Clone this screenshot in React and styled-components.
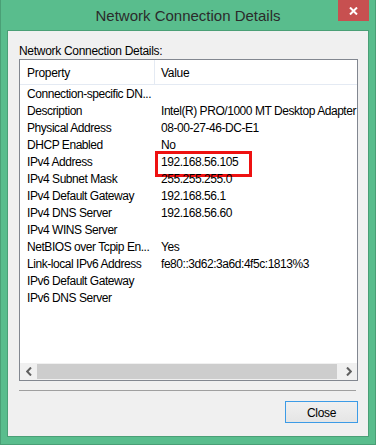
import React from 'react'
import styled, { createGlobalStyle } from 'styled-components'

const GlobalStyle = createGlobalStyle`
    html, body {
        margin: 0;
        padding: 0;
        background: #59bd8d;
    }
    * {
        box-sizing: border-box;
    }
`

const Window = styled.div`
    width: 376px;
    height: 445px;
    display: flex;
    flex-direction: column;
    background: #59bd8d;
    border: 1px solid #4a9f76;
    border-top: none;
    font-family: "Liberation Sans", Arial, sans-serif;
`

const TitleBar = styled.div`
    height: 30px;
    display: grid;
    grid-template-columns: 37px 1fr 37px;
    align-items: start;
`

const Title = styled.div`
    grid-column: 2;
    text-align: center;
    font-size: 15px;
    line-height: 30px;
    padding-top: 1px;
    color: #2b2b2b;
`

const CaptionClose = styled.div`
    width: 31px;
    height: 21px;
    background: #c75050;
    display: flex;
    align-items: center;
    justify-content: center;
`

const Client = styled.div`
    flex: 1;
    margin: 0 6px 7px 6px;
    border: 1px solid #4a9f76;
    background: #f0f0f0;
    display: flex;
    flex-direction: column;
    padding: 10px 10px 13px 11px;
`

const Label = styled.div`
    font-size: 12px;
    line-height: 16px;
    padding-top: 2px;
    height: 16px;
    letter-spacing: -0.3px;
    color: #000;
`

const ListBox = styled.div`
    margin-top: 2px;
    height: 322px;
    border: 1px solid #828790;
    background: #fff;
    display: flex;
    flex-direction: column;
`

const Rows = styled.div`
    flex: 1;
`

const Header = styled.div`
    display: grid;
    grid-template-columns: 135px 1fr;
    height: 25px;
    border-bottom: 1px solid #e4eaf3;
`

const HeaderCell = styled.div`
    font-size: 12px;
    line-height: 24px;
    padding: 1px 0 0 ${props => props.first ? '7px' : '6px'};
    letter-spacing: -0.3px;
    color: #000;
    border-right: ${props => props.first ? '1px solid #e4eaf3' : 'none'};
`

const Row = styled.div`
    display: grid;
    grid-template-columns: 135px 1fr;
    height: 17px;
`

const Cell = styled.div`
    position: relative;
    height: 17px;
    font-size: 12px;
    line-height: 15px;
    padding: 2px 0 0 ${props => props.first ? '7px' : '6px'};
    letter-spacing: -0.45px;
    color: #000;
    white-space: nowrap;

    &::after {
        content: '';
        display: ${props => props.highlight ? 'block' : 'none'};
        position: absolute;
        left: 0;
        top: -2px;
        width: 91px;
        height: 20px;
        border: 3px solid #ee1111;
    }
`

const ScrollBar = styled.div`
    height: 17px;
    display: flex;
    background: #f0f0f0;
`

const ScrollArrow = styled.div`
    width: 17px;
    height: 17px;
    display: flex;
    align-items: center;
    justify-content: center;
`

const Thumb = styled.div`
    width: 300px;
    margin: 1px 0;
    background: #cdcdcd;
`

const Track = styled.div`
    flex: 1;
`

const Separator = styled.div`
    margin-top: 9px;
    width: 337px;
    height: 1px;
    background: #a0a0a0;
`

const Footer = styled.div`
    margin-top: 10px;
    display: flex;
    justify-content: flex-end;
`

const Button = styled.button`
    width: 73px;
    height: 22px;
    border: 1px solid #3c9be6;
    background: linear-gradient(#f0f0f0, #e5e5e5);
    font-family: "Liberation Sans", Arial, sans-serif;
    font-size: 12px;
    letter-spacing: -0.3px;
    color: #000;
    padding: 1px 0 0;
`

const rows = [
    ['Connection-specific DN...', ''],
    ['Description', 'Intel(R) PRO/1000 MT Desktop Adapter'],
    ['Physical Address', '08-00-27-46-DC-E1'],
    ['DHCP Enabled', 'No'],
    ['IPv4 Address', '192.168.56.105', true],
    ['IPv4 Subnet Mask', '255.255.255.0'],
    ['IPv4 Default Gateway', '192.168.56.1'],
    ['IPv4 DNS Server', '192.168.56.60'],
    ['IPv4 WINS Server', ''],
    ['NetBIOS over Tcpip En...', 'Yes'],
    ['Link-local IPv6 Address', 'fe80::3d62:3a6d:4f5c:1813%3'],
    ['IPv6 Default Gateway', ''],
    ['IPv6 DNS Server', ''],
]

const App = () => {
    return (
        <>
            <GlobalStyle />
            <Window>
                <TitleBar>
                    <Title>Network Connection Details</Title>
                    <CaptionClose>
                        <svg width="9" height="8" viewBox="0 0 9 8">
                            <path d="M1 0.5 L8 7.5 M8 0.5 L1 7.5" stroke="#fff" strokeWidth="2" />
                        </svg>
                    </CaptionClose>
                </TitleBar>
                <Client>
                    <Label>Network Connection Details:</Label>
                    <ListBox>
                        <Rows>
                            <Header>
                                <HeaderCell first>Property</HeaderCell>
                                <HeaderCell>Value</HeaderCell>
                            </Header>
                            {rows.map(([prop, value, hl]) => (
                                <Row key={prop}>
                                    <Cell first>{prop}</Cell>
                                    <Cell highlight={hl}>{value}</Cell>
                                </Row>
                            ))}
                        </Rows>
                        <ScrollBar>
                            <ScrollArrow>
                                <svg width="6" height="9" viewBox="0 0 6 9">
                                    <path d="M5 0.5 L1.2 4.5 L5 8.5" stroke="#606060" strokeWidth="2" fill="none" />
                                </svg>
                            </ScrollArrow>
                            <Thumb />
                            <Track />
                            <ScrollArrow>
                                <svg width="6" height="9" viewBox="0 0 6 9">
                                    <path d="M1 0.5 L4.8 4.5 L1 8.5" stroke="#606060" strokeWidth="2" fill="none" />
                                </svg>
                            </ScrollArrow>
                        </ScrollBar>
                    </ListBox>
                    <Separator />
                    <Footer>
                        <Button>Close</Button>
                    </Footer>
                </Client>
            </Window>
        </>
    )
}

export default App
